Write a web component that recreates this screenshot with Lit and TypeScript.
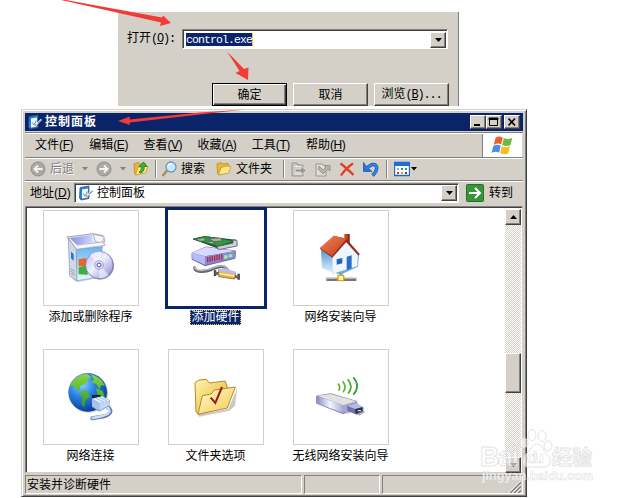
import { LitElement, html, svg, css } from "lit";
import { customElement } from "lit/decorators.js";
import { classMap } from "lit/directives/class-map.js";

const panelIcon = html`<svg class="ico16" viewBox="0 0 16 16">
  <path d="M2 2.5 11 1v12.5L3 15 1.5 13z" fill="#2f7fd0" stroke="#1b4f9a" stroke-width=".7"/>
  <path d="M4 4.5 10 3.4v9L4 13.5z" fill="#f4f8fc"/>
  <path d="M5 8.5 7 11 9.5 6.5" fill="none" stroke="#6aa8e0" stroke-width="1.2"/>
  <path d="M8.5 12 10 9.5 14.5 5.5" stroke="#dbe6f2" stroke-width="1.8" fill="none"/>
  <path d="M7.5 10 10 12.5" stroke="#e9a030" stroke-width="1.6"/>
  <path d="M11 9 14.8 6" stroke="#56789c" stroke-width="1"/>
</svg>`;

const down = html`<svg class="down" viewBox="0 0 7 4"><path d="M0 0h7L3.5 4z" fill="#000"/></svg>`;
const up = html`<svg class="down" viewBox="0 0 7 4"><path d="M0 4h7L3.5 0z" fill="#000"/></svg>`;

const folder = svg`<path d="M1 3 5 1.5 7 3l5-.6 1 2V7L3 14 1.5 12z" fill="#e9b53a" stroke="#b98212" stroke-width=".7"/>
  <path d="M5 6.5 10 5l5 .5-2.5 6.5L2.5 14z" fill="#ffe88a" stroke="#c99520" stroke-width=".8"/>`;

const tiles = [
  {
    label: "添加或删除程序", box: "73 18 282 282",
    art: svg`
      <path d="M153 220 173 232 255 215 258 206 180 226z" fill="#b9bcc8" opacity=".7"/>
      <path d="M142 96 221 86 250 92 255 107 248 127 170 134z" fill="#e6e9f4" stroke="#8d91a8" stroke-width="2.5"/>
      <path d="M151 99 217 89 219 111 168 121z" fill="url(#flap)"/>
      <path d="M221 88 254 95 247 116 227 109z" fill="#f4f5fa" stroke="#999db2" stroke-width="2"/>
      <path d="M146 101 170 132 172 227 150 213z" fill="#d2d7e6" stroke="#8b8fa6" stroke-width="2"/>
      <path d="M170 132 247 126 247 215 172 227z" fill="url(#boxg)" stroke="#8d9ab8" stroke-width="2"/>
      <path d="M147 100 171 133 257 121 249 111 173 120 151 99z" fill="#f5f6fb" stroke="#999db2" stroke-width="2"/>
      <path d="M154 140 162 147v20l-8-7z" fill="#1d78d8"/>
      <path d="M153 191 165 199M153 198 165 206M154 205 165 212" stroke="#8086a0" stroke-width="2"/>
      <path d="M177 163 199 159v24l-22 1z" fill="#e8642a"/><path d="M177 187 204 181v28l-27-1z" fill="#3fae3c"/>
      <circle cx="241" cy="182" r="42" fill="#8c90c8"/><circle cx="239" cy="180" r="41" fill="url(#disc)" stroke="#6c70ae" stroke-width="2"/>
      <path d="M239 180 211 150Q225 138 245 140zM239 180 267 209Q257 220 239 220z" fill="#fff" opacity=".55"/>
      <circle cx="238" cy="180" r="13" fill="#dfe0f6" stroke="#7d80ba" stroke-width="2"/><circle cx="238" cy="180" r="6" fill="#fff" stroke="#4054a8" stroke-width="3"/>`,
  },
  {
    label: "添加硬件", selected: true, box: "43 18 282 282",
    art: svg`
      <path d="M121 185Q116 196 132 199 158 202 178 190 200 181 209 186 218 190 218 196" fill="none" stroke="#67666e" stroke-width="9"/>
      <path d="M121 184Q118 194 134 196 158 198 178 187 200 178 211 185 218 189 218 195" fill="none" stroke="#b7b6bd" stroke-width="5"/>
      <path d="M112 144 154 126 243 138 241 160 151 182 112 163z" fill="#6269b4" stroke="#484d8a" stroke-width="2"/>
      <path d="M112 143 154 126 243 138 151 154z" fill="#d6dbff"/>
      <path d="M112 143 151 154 151 180 113 162z" fill="#b4bcf8"/>
      <path d="M151 154 243 138 241 158 151 180z" fill="#868cd6"/>
      <path d="M159 156v16M166 155v16M173 153v16M180 152v16M187 150v16M194 149v16M201 148v16" stroke="#bc283c" stroke-width="4"/><path d="M208 151h11v10h-11zM222 148h11v9h-11z" fill="#a7e6a0"/>
      <path d="M114 103 150 94 244 104 248 121 191 133 184 128z" fill="#2b4a32"/>
      <path d="M115 102 150 94 241 108 190 124z" fill="#2f9b3c" stroke="#16602a" stroke-width="2"/>
      <path d="M124 103 147 98 153 107 136 109zM162 100 196 99 206 107 177 110zM151 113 174 108 181 117z" fill="#aab3ad" stroke="#3b5a43" stroke-width="2"/>
      <path d="M186 125 235 114V105l12 1v17l-55 11z" fill="#cdced8" stroke="#5c5e6c" stroke-width="2.5"/>
      <path d="M181 196v17M252 206v18" stroke="#3e3e48" stroke-width="7"/>
      <path d="M181 204 192 206M240 214 252 217" stroke="#66646e" stroke-width="9"/>
      <path d="M192 194 242 202 240 222 192 215z" fill="#f1b434" stroke="#624b5b" stroke-width="2"/>
      <path d="M194 203 240 211v4l-46-7z" fill="#fff2b2"/><path d="M192 192 209 190 244 200 241 208 193 199z" fill="#b9bde8"/>`,
  },
  {
    label: "网络安装向导", box: "43 18 282 282",
    art: svg`
      <path d="M140 219h90v9h-90z" fill="#77776f"/><path d="M138 216h92v5h-92z" fill="#d7d8cf"/>
      <path d="M179 200h9v20h-9z" fill="#a0a098"/>
      <path d="M194 87h15v28h-15z" fill="#c84328"/><path d="M204 87h6v28h-6z" fill="#8e2316"/>
      <path d="M124 134 160 142 194 106 238 148 235 185 182 209 128 188z" fill="#69a7de"/>
      <path d="M125 134 160 143V203L127 189z" fill="url(#wall)"/>
      <path d="M158 151 198 110 235 151 233 184 158 207z" fill="#f0f6ff" stroke="#a0bbdc" stroke-width="1"/>
      <path d="M120 131 163 92 200 101 240 147 237 152 200 111 158 158z" fill="#9b2819"/>
      <path d="M120 129 163 92 201 101 157 153z" fill="url(#roof)"/>
      <path d="M171 163 188 159v16l-17 4z" fill="#1d64b9"/><path d="M201 155 216 151v39l-15 5z" fill="#2970c4"/>
      <path d="M175 211h17v16h-17z" fill="#fff7b0" stroke="#e1a31b" stroke-width="4"/>`,
  },
  {
    label: "网络连接", box: "73 31 282 282",
    art: svg`
      <circle cx="207" cy="161" r="58" fill="#8790a0" opacity=".5"/><circle cx="204" cy="158" r="58" fill="url(#globe)"/>
      <path d="M150 138Q168 105 201 102L214 111 204 121 197 132 180 140 183 153 171 151 162 138zM214 104Q244 112 256 139L245 136 239 148 229 132 216 129 223 119zM188 151 205 158 211 171 198 181 194 204 185 193 188 175 181 164zM229 145 249 154 257 176 244 172 233 163z" fill="url(#land)"/>
      <path d="M216 166 243 166 244 176 218 177z" fill="#132438"/>
      <path d="M257 196Q278 211 270 220 262 230 240 232L218 236" fill="none" stroke="#647ca8" stroke-width="12" stroke-linecap="round"/>
      <path d="M257 196Q274 211 267 219 260 227 240 231L219 235" fill="none" stroke="#ccdcf6" stroke-width="8" stroke-linecap="round"/>
      <path d="M217 177 247 170 271 182 269 198 239 216 217 202z" fill="#7b99c9"/>
      <path d="M217 177 247 170 270 183 240 190z" fill="#e2edff"/><path d="M217 178 240 190 239 213 217 200z" fill="#a6c3eb"/>
      <path d="M240 190 270 183 268 197 239 213z" fill="#c3d6f5"/><path d="M227 175 252 186M237 172 261 183" stroke="#89a8d6" stroke-width="2"/>`,
  },
  {
    label: "文件夹选项", box: "43 31 282 282",
    art: svg`
      <path d="M130 225 221 207 248 145 241 198 224 213 134 231z" fill="#77767d" opacity=".4"/>
      <path d="M121 129 133 121 155 119 164 130 211 124 217 139 218 202 131 224 124 216z" fill="url(#fold)" stroke="#b98b1e" stroke-width="3"/>
      <path d="M143 168 170 163 179 151 242 142 218 205 130 224z" fill="url(#foldfront)" stroke="#b98b1e" stroke-width="3"/>
      <path d="M168 174 182 190 202 142" fill="none" stroke="#9c1717" stroke-width="6"/>`,
  },
  {
    label: "无线网络安装向导", box: "43 31 282 282",
    art: svg`
      <path d="M117 194 190 224 222 214 239 228 257 217 240 206 205 222z" fill="#777b8b" opacity=".55"/>
      <path d="M111 169 153 162 231 185 233 208 190 221 111 191z" fill="#8f93bd" stroke="#595c99" stroke-width="2"/>
      <path d="M112 168 153 163 231 185 191 197z" fill="#e2e2df"/><path d="M112 169 190 197V220L112 191z" fill="url(#usb)"/>
      <path d="M191 197 231 185V207L190 220z" fill="#a5a8d4"/>
      <path d="M202 198 230 191 252 204 250 216 231 225 204 214z" fill="#6c73a8"/><path d="M202 198 231 191 248 202 226 208z" fill="#b6bce5"/>
      <path d="M226 209 248 203 248 214 228 222z" fill="#2a3044"/><path d="M234 213h10" stroke="#fff" stroke-width="3"/>
      <path d="M175 132Q184 142 177 153" fill="none" stroke="#68ac25" stroke-width="5"/>
      <path d="M189 125Q203 142 190 158" fill="none" stroke="#60b729" stroke-width="5"/>
      <path d="M204 119Q223 142 205 162" fill="none" stroke="#45ad31" stroke-width="5"/>
      <path d="M221 113Q244 140 221 165" fill="none" stroke="#2c9c39" stroke-width="5"/>`,
  },
];

const gradients = svg`<defs>
  <linearGradient id="flap"><stop stop-color="#868fdc"/><stop offset="1" stop-color="#cfd6ff"/></linearGradient>
  <linearGradient id="boxg" x2="0" y2="1"><stop stop-color="#68b5f2"/><stop offset="1" stop-color="#eaf7ff"/></linearGradient>
  <linearGradient id="disc" x2="1" y2="1"><stop stop-color="#b8b7f5"/><stop offset=".45" stop-color="#f2f1ff"/><stop offset="1" stop-color="#8480cf"/></linearGradient>
  <linearGradient id="wall" x2="0" y2="1"><stop stop-color="#5398d8"/><stop offset="1" stop-color="#dcf1ff"/></linearGradient>
  <linearGradient id="roof" x2="1" y2="1"><stop stop-color="#f18655"/><stop offset="1" stop-color="#c33a1c"/></linearGradient>
  <radialGradient id="globe" cx=".35" cy=".28" r=".75"><stop stop-color="#89d5ff"/><stop offset=".45" stop-color="#2a83e2"/><stop offset="1" stop-color="#063a9a"/></radialGradient>
  <linearGradient id="land" x2="0" y2="1"><stop stop-color="#8cd63b"/><stop offset="1" stop-color="#2f982b"/></linearGradient>
  <linearGradient id="fold" x2="1" y2="1"><stop stop-color="#fff5b0"/><stop offset="1" stop-color="#e6ab2e"/></linearGradient>
  <linearGradient id="foldfront" x2="1" y2="1"><stop stop-color="#fffbd2"/><stop offset="1" stop-color="#f5c94f"/></linearGradient>
  <linearGradient id="usb"><stop stop-color="#888cc4"/><stop offset=".5" stop-color="#f5f5ff"/><stop offset="1" stop-color="#a8abd9"/></linearGradient>
</defs>`;

const menus = [["文件", "F"], ["编辑", "E"], ["查看", "V"], ["收藏", "A"], ["工具", "T"], ["帮助", "H"]];

@customElement("app-root")
export class AppRoot extends LitElement {
  static styles = css`
    :host { display: block; position: relative; width: 627px; height: 498px; overflow: hidden; background: #fff; color: #000;
      font: 12px/16px "Liberation Sans", "Noto Sans CJK SC", sans-serif; white-space: nowrap; }
    * { box-sizing: border-box; }
    svg { display: block; flex: none; }
    u { text-underline-offset: 1px; text-decoration-thickness: 1px; }
    .mono { font-family: "Liberation Mono", "Noto Sans CJK SC", monospace; font-size: 12px; letter-spacing: -1.2px; }
    .cn { letter-spacing: 0; }
    .run { margin: 12px 0 0 118px; width: 341px; height: 94px; background: #d4d0c8; border-right: 1px solid #808080; padding: 17px 9px 0; overflow: hidden; }
    .runrow { display: flex; align-items: center; height: 20px; }
    .runrow label { width: 55px; line-height: 18px; }
    .field { display: flex; align-items: center; background: #fff; border: 1px solid; border-color: #808080 #fff #fff #808080; box-shadow: inset 1px 1px #404040; }
    .runfield { width: 266px; height: 20px; padding: 1px 1px 0 3px; justify-content: space-between; }
    .sel { background: #0a246a; color: #fff; height: 13px; line-height: 13px; font-size: 11.5px; letter-spacing: -.9px; width: 67px; border-right: 1px solid #f0c060; }
    .raised { background: #d4d0c8; border: 1px solid; border-color: #fff #404040 #404040 #fff; box-shadow: inset -1px -1px #808080; display: flex; align-items: center; justify-content: center; flex: none; }
    .dd { width: 16px; height: 16px; }
    .down { width: 7px; height: 4px; }
    .btns { display: flex; gap: 6px; margin: 34px 0 0 85px; }
    .btn { width: 75px; height: 23px; }
    .btn.def { border: 1px solid #000; box-shadow: inset 1px 1px #fff, inset -1px -1px #404040, inset -2px -2px #808080; }
    .win { margin: 3px 0 0 21px; width: 506px; height: 388px; background: #d4d0c8; border: 1px solid; border-color: #d4d0c8 #404040 #404040 #d4d0c8; box-shadow: inset 1px 1px #fff, inset -1px -1px #808080; padding: 3px; }
    .title { height: 18px; width: 498px; background: #0a246a; color: #fff; display: flex; align-items: center; padding: 0 3px 0 2px; font-weight: bold; letter-spacing: 1px; }
    .title span { margin-left: 2px; flex: 1; }
    .cap { width: 16px; height: 14px; }
    .cap.x { margin-left: 2px; }
    .cap svg { width: 12px; height: 10px; }
    .ico16 { width: 16px; height: 16px; }
    .menu { display: flex; height: 26px; margin-top: 1px; border-top: 1px solid #808080; border-bottom: 1px solid #808080; box-shadow: inset 0 1px #fff, 0 1px #fff; width: 498px; padding-left: 10px; align-items: center; }
    .menu span { width: 54.2px; }
    .menu i { font-style: normal; letter-spacing: -.4px; }
    .flag { margin-left: auto; margin-right: 1px; width: 40px; height: 23px; border-left: 1px solid #808080; background: #fff; display: flex; justify-content: center; margin-top: 1px; }
    .tools { display: flex; height: 23px; align-items: center; width: 498px; border-bottom: 1px solid #808080; box-shadow: 0 1px #fff; padding: 0 0 0 5px; }
    .grey { color: #808080; text-shadow: 1px 1px #fff; }
    .w5 { width: 6px; height: 4px; }
    .sep { width: 2px; height: 18px; border-left: 1px solid #808080; background: #fff; flex: none; }
    .g0 { margin-left: 1px; } .g1 { margin-left: 4px; } .g6 { margin-left: 6px; } .g7 { margin-left: 7px; } .g2 { margin-left: 8px; } .g3 { margin-left: 11px; }
    .addr { display: flex; height: 25px; align-items: center; padding: 0 0 2px 5px; }
    .addr label { width: 44px; }
    .afield { width: 385px; height: 20px; padding: 1px 1px 0 3px; }
    .afield span { flex: 1; margin-left: 3px; }
    .go { margin: 0 5px 0 7px; }
    .content { display: flex; width: 498px; height: 267px; background: #fff; border: 1px solid; border-color: #808080 #d4d0c8 #d4d0c8 #808080; box-shadow: inset 1px 1px #404040; padding: 2px 1px 1px 2px; justify-content: space-between; }
    .grid { display: grid; grid-template-columns: 125px 125px 125px; grid-auto-rows: 139px; width: 400px; margin-left: -1px; padding: 1px 0 0 1px; }
    .tile { display: flex; flex-direction: column; align-items: center; width: 125px; }
    .pic { width: 96px; height: 96px; border: 1px solid #d4d0c8; }
    .pic svg { width: 94px; height: 94px; }
    .label { margin-top: 3px; height: 16px; line-height: 16px; padding: 0 1px; }
    .on .pic { outline: 3px solid #0a246a; border-color: #fff; }
    .on .label { background: #0a246a; color: #fff; outline: 1px dotted #f0c060; outline-offset: -1px; line-height: 15px; height: 15px; margin-top: 4px; }
    .sb { width: 16px; height: 264px; display: flex; flex-direction: column; background: repeating-conic-gradient(#d4d0c8 0 25%, #fff 0 50%) 0 0 / 2px 2px; }
    .sb .raised { width: 16px; height: 16px; }
    .sb .thumb { height: 40px; margin: 128px 0 64px; }
    .status { display: flex; gap: 2px; height: 19px; margin-top: 2px; width: 498px; }
    .pane { border: 1px solid; border-color: #808080 #fff #fff #808080; width: 76px; padding: 0 1px; line-height: 19px; }
    .pane.first { width: 277px; } .pane.last { flex: 1; display: flex; justify-content: flex-end; align-items: flex-end; }
    .grip { width: 13px; height: 13px; }
    .over { position: absolute; left: 0; top: 0; width: 627px; height: 498px; pointer-events: none; }
    .wm { font-family: "Liberation Sans", "Noto Sans CJK SC", sans-serif; font-weight: bold; }
  `;

  render() {
    return html`
      <section class="run">
        <div class="runrow">
          <label class="mono"><span class="cn">打开</span>(<u>O</u>):</label>
          <div class="field runfield"><span class="sel mono">control.exe</span><span class="raised dd">${down}</span></div>
        </div>
        <div class="btns">
          <div class="raised btn def">确定</div>
          <div class="raised btn">取消</div>
          <div class="raised btn mono"><span class="cn">浏览</span>(<u>B</u>)...</div>
        </div>
      </section>

      <section class="win">
        <div class="title">${panelIcon}<span>控制面板</span>
          <div class="raised cap"><svg viewBox="0 0 12 10"><path d="M2 7h6v2H2z"/></svg></div>
          <div class="raised cap"><svg viewBox="0 0 12 10"><path d="M1.5 1.5h8v7h-8zM1 1h9v1.5H1z" fill="none" stroke="#000"/></svg></div>
          <div class="raised cap x"><svg viewBox="0 0 12 10"><path d="M2.5 1.5 9 8.5M9 1.5 2.5 8.5" stroke="#000" stroke-width="1.6"/></svg></div>
        </div>
        <div class="menu">${menus.map(([t, k]) => html`<span>${t}<i>(<u>${k}</u>)</i></span>`)}
          <div class="flag"><svg width="23" height="23" viewBox="1 1 20.5 20.5">
            <path d="M5 4.5Q8 2 11.5 4.3L10 10.3Q7 8.5 3.4 10.7z" fill="#e8602c"/>
            <path d="M12.4 4.6Q16 6.5 20 4.3L18.4 10.8Q14.5 12.5 11 10.7z" fill="#73b741"/>
            <path d="M3.1 11.8Q6.5 9.7 9.7 11.5L8.2 17.7Q5 16 1.5 18z" fill="#4c8de0"/>
            <path d="M10.7 11.9Q14 13.7 18 11.8L16.5 18.2Q13 20 9.2 18z" fill="#f6bd22"/></svg></div>
        </div>
        <div class="tools">
          <svg class="ico16" viewBox="0 0 16 16"><circle cx="8" cy="8" r="7" fill="#aaa9a4" stroke="#8e8d89"/><path d="M12.5 8H5M8 4.5 4.5 8 8 11.5" fill="none" stroke="#f4f3ef" stroke-width="2"/></svg>
          <span class="grey g1">后退</span>
          <svg class="w5 g2" viewBox="0 0 6 4"><path d="M0 0h6L3 3.5z" fill="#808080"/></svg>
          <svg class="ico16 g2" viewBox="0 0 16 16"><circle cx="8" cy="8" r="7" fill="#aaa9a4" stroke="#8e8d89"/><path d="M3.5 8H11M8 4.5 11.5 8 8 11.5" fill="none" stroke="#f4f3ef" stroke-width="2"/></svg>
          <svg class="w5 g2" viewBox="0 0 6 4"><path d="M0 0h6L3 3.5z" fill="#808080"/></svg>
          <svg class="ico16 g7" viewBox="0 0 16 16">${folder}<path d="M7 12Q12 11 11 5.5H14L10.5 1 6 5.5H8.5Q9 9.5 6 11z" fill="#39b539" stroke="#187a1e" stroke-width=".8"/></svg>
          <div class="sep g6"></div>
          <svg class="ico16 g1" viewBox="0 0 16 16"><path d="M1.5 15 6.5 9" stroke="#b88952" stroke-width="2.6"/><circle cx="10" cy="6" r="5" fill="#cde9fd" stroke="#6798d2" stroke-width="1.3"/><path d="M7 5Q8 2.5 11 2.5" fill="none" stroke="#fff" stroke-width="1.5"/></svg>
          <span class="g1">搜索</span>
          <svg class="ico16 g3" viewBox="0 0 16 16">${folder}</svg>
          <span class="g1">文件夹</span>
          <div class="sep g3"></div>
          <svg class="ico16 g6" viewBox="0 0 16 16"><path d="M1 2h5l1 2h5v11H1z" fill="#c7c6c1" stroke="#96958f"/><path d="M3.5 5.500h6M3.500 13h6" stroke="#f4f3ef"/><path d="M4 8h6V5l5.500 4.500L10 14v-3H4z" fill="#989791" stroke="#f2f1ec" stroke-width=".7"/></svg>
          <svg class="ico16 g2" viewBox="0 0 16 16"><path d="M1 3h6l4 3v9H1z" fill="#deddd8" stroke="#96958f"/><path d="M4 5 8 9 11 6 9.500 4.500H15V10L13 8 8 13 3 8z" fill="#b5b4ae" stroke="#85847f" stroke-width=".7"/></svg>
          <svg class="ico16 g2" viewBox="0 0 16 16"><path d="M1.5 2.5Q7 6.5 14.5 14M14 2.5Q7 7 2 14.5" fill="none" stroke="#e5391c" stroke-width="2.2"/></svg>
          <svg class="ico16 g2" viewBox="0 0 16 16"><path d="M3.500 7.500Q11 .500 13.500 5.500 14.500 10 9.500 14.500" fill="none" stroke="#1452a8" stroke-width="3.400"/><path d="M.500 1.500V10.500H9L5.500 7.500 3 5z" fill="#2474d8" stroke="#1452a8" stroke-width=".7"/><path d="M3.500 7.500Q11 .500 13.500 5.500 14.500 10 9.500 14.500" fill="none" stroke="#3285e6" stroke-width="2.200"/></svg>
          <div class="sep g7"></div>
          <svg class="ico16 g6" viewBox="0 0 16 16"><path d="M.5 1.500h15v13H.5z" fill="#fff" stroke="#1d66d0" stroke-width="1.300"/><path d="M0 1h16v4H0z" fill="#1d6edb"/><path d="M3 7h2v2H3z" fill="#a7a0c8"/><path d="M7 7h2v2H7z" fill="#3f72d2"/><path d="M11 7h2v2h-2z" fill="#37a447"/><path d="M3 11h2v2H3z" fill="#d23630"/><path d="M7 11h2v2H7z" fill="#e2a330"/><path d="M11 11h2v2h-2z" fill="#31408f"/></svg>
          <svg class="w5 g0" viewBox="0 0 6 4"><path d="M0 0h6L3 3.5z"/></svg>
        </div>
        <div class="addr"><label>地址(<u>D</u>)</label>
          <div class="field afield">${panelIcon}<span>控制面板</span><div class="raised dd">${down}</div></div>
          <svg class="go" width="18" height="18" viewBox="0 0 18 18"><rect x=".5" y=".5" width="17" height="17" rx="1" fill="#38943a" stroke="#237327"/><path d="M3 9h11M9 4l5 5-5 5" fill="none" stroke="#fff" stroke-width="2"/></svg>
          <span>转到</span>
        </div>
        <div class="content">
          <div class="grid">${tiles.map((t) => html`
            <div class=${classMap({ tile: true, on: !!t.selected })}>
              <div class="pic"><svg viewBox=${t.box}>${gradients}${t.art}</svg></div>
              <div class="label">${t.label}</div>
            </div>`)}
          </div>
          <div class="sb"><div class="raised">${up}</div><div class="raised thumb"></div><div class="raised">${down}</div></div>
        </div>
        <div class="status">
          <div class="pane first">安装并诊断硬件</div><div class="pane"></div>
          <div class="pane last"><svg class="grip" viewBox="0 0 13 13"><path d="M2 13 13 2M6 13 13 6M10 13 13 10" stroke="#808080" stroke-width="1.6"/><path d="M.5 13 13 .5M4.5 13 13 4.5M8.5 13 13 8.5" stroke="#fff"/></svg></div>
        </div>
      </section>

      <svg class="over" viewBox="0 0 627 498">
        <g fill="#f23b36">
          <path d="M61 0 66 0 162 17.5 163 15.5 171 23 160 26 161 22.5z"/>
          <path d="M227 51.5 244 69 248.500 67.5 248 80 235.500 73 239.500 71z"/>
          <path d="M118 121 130 116.500 129.500 119.500 200 112.500 245 109.500 200 114.500 129.500 122.500 130 125z"/>
        </g>
        <g class="wm" fill="#fff" fill-opacity=".6" stroke="#cfcfcf" stroke-opacity=".6" stroke-width="1">
          <text x="480" y="466" font-size="27" textLength="39">Bai</text>
          <ellipse cx="524" cy="443" rx="4" ry="5"/><ellipse cx="532" cy="435" rx="4" ry="5.500"/><ellipse cx="542" cy="436" rx="4" ry="5.500"/><ellipse cx="548" cy="446" rx="4" ry="5"/>
          <path d="M537 444Q541 444 544 451L550 458Q552 467 544 467H527Q520 466 524 456L530 450Q533 444 537 444z"/>
          <text x="527" y="463" font-size="17" textLength="17" stroke-width=".7">du</text>
          <text x="552" y="465" font-size="20" textLength="40">经验</text>
        </g>
        <text class="wm" x="482" y="480" font-size="12.500" textLength="111" fill="#fff" fill-opacity=".8" stroke="#d4d4d4" stroke-opacity=".6" stroke-width=".7">jingyan.baidu.com</text>
      </svg>`;
  }
}
